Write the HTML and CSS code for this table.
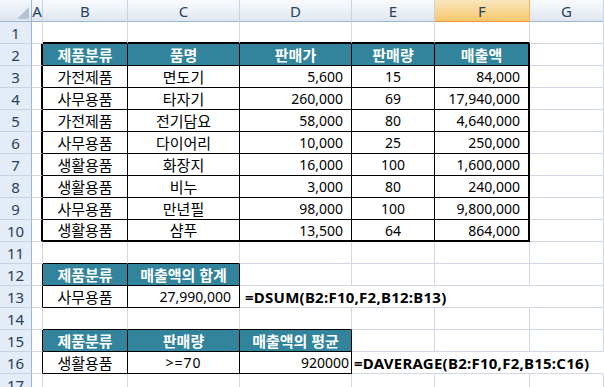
FILE: index.html
```html
<!DOCTYPE html>
<html lang="ko">
<head>
<meta charset="utf-8">
<title>DSUM DAVERAGE</title>
<link rel="stylesheet" href="styles.css">
</head>
<body>
<div class="sheet">
  <!-- header row -->
  <div class="c corner"><svg class="tri" width="12" height="12" viewBox="0 0 12 12"><polygon points="12,0 12,12 0,12" fill="#b5c2d3"/></svg></div>
  <div class="c ch">A</div>
  <div class="c ch">B</div>
  <div class="c ch">C</div>
  <div class="c ch">D</div>
  <div class="c ch">E</div>
  <div class="c ch sel">F</div>
  <div class="c ch">G</div>

  <!-- row 1 -->
  <div class="c rh">1</div>
  <div class="c"></div>
  <div class="c bB"></div><div class="c bB"></div><div class="c bB"></div><div class="c bB"></div><div class="c bB"></div>
  <div class="c"></div>

  <!-- row 2 -->
  <div class="c rh">2</div>
  <div class="c rR"></div>
  <div class="c th r1 b1">제품분류</div>
  <div class="c th r1 b1">품명</div>
  <div class="c th r1 b1">판매가</div>
  <div class="c th r1 b1">판매량</div>
  <div class="c th rR b1">매출액</div>
  <div class="c"></div>

  <!-- row 3 -->
  <div class="c rh">3</div>
  <div class="c rR"></div>
  <div class="c ctr r1 b1">가전제품</div>
  <div class="c ctr r1 b1">면도기</div>
  <div class="c num r1 b1">5,600</div>
  <div class="c ctr n r1 b1">15</div>
  <div class="c num rR b1">84,000</div>
  <div class="c"></div>

  <!-- row 4 -->
  <div class="c rh">4</div>
  <div class="c rR"></div>
  <div class="c ctr r1 b1">사무용품</div>
  <div class="c ctr r1 b1">타자기</div>
  <div class="c num r1 b1">260,000</div>
  <div class="c ctr n r1 b1">69</div>
  <div class="c num rR b1">17,940,000</div>
  <div class="c"></div>

  <!-- row 5 -->
  <div class="c rh">5</div>
  <div class="c rR"></div>
  <div class="c ctr r1 b1">가전제품</div>
  <div class="c ctr r1 b1">전기담요</div>
  <div class="c num r1 b1">58,000</div>
  <div class="c ctr n r1 b1">80</div>
  <div class="c num rR b1">4,640,000</div>
  <div class="c"></div>

  <!-- row 6 -->
  <div class="c rh">6</div>
  <div class="c rR"></div>
  <div class="c ctr r1 b1">사무용품</div>
  <div class="c ctr r1 b1">다이어리</div>
  <div class="c num r1 b1">10,000</div>
  <div class="c ctr n r1 b1">25</div>
  <div class="c num rR b1">250,000</div>
  <div class="c"></div>

  <!-- row 7 -->
  <div class="c rh">7</div>
  <div class="c rR"></div>
  <div class="c ctr r1 b1">생활용품</div>
  <div class="c ctr r1 b1">화장지</div>
  <div class="c num r1 b1">16,000</div>
  <div class="c ctr n r1 b1">100</div>
  <div class="c num rR b1">1,600,000</div>
  <div class="c"></div>

  <!-- row 8 -->
  <div class="c rh">8</div>
  <div class="c rR"></div>
  <div class="c ctr r1 b1">생활용품</div>
  <div class="c ctr r1 b1">비누</div>
  <div class="c num r1 b1">3,000</div>
  <div class="c ctr n r1 b1">80</div>
  <div class="c num rR b1">240,000</div>
  <div class="c"></div>

  <!-- row 9 -->
  <div class="c rh">9</div>
  <div class="c rR"></div>
  <div class="c ctr r1 b1">사무용품</div>
  <div class="c ctr r1 b1">만년필</div>
  <div class="c num r1 b1">98,000</div>
  <div class="c ctr n r1 b1">100</div>
  <div class="c num rR b1">9,800,000</div>
  <div class="c"></div>

  <!-- row 10 -->
  <div class="c rh">10</div>
  <div class="c rR"></div>
  <div class="c ctr r1 bB">생활용품</div>
  <div class="c ctr r1 bB">샴푸</div>
  <div class="c num r1 bB">13,500</div>
  <div class="c ctr n r1 bB">64</div>
  <div class="c num rR bB">864,000</div>
  <div class="c"></div>

  <!-- row 11 -->
  <div class="c rh">11</div>
  <div class="c"></div>
  <div class="c b1"></div>
  <div class="c b1"></div>
  <div class="c"></div>
  <div class="c"></div>
  <div class="c"></div>
  <div class="c"></div>

  <!-- row 12 -->
  <div class="c rh">12</div>
  <div class="c r1"></div>
  <div class="c th r1 b1">제품분류</div>
  <div class="c th r1 b1">매출액의 합계</div>
  <div class="c"></div>
  <div class="c"></div>
  <div class="c"></div>
  <div class="c"></div>

  <!-- row 13 -->
  <div class="c rh">13</div>
  <div class="c r1"></div>
  <div class="c ctr r1 b1">사무용품</div>
  <div class="c num r1 b1">27,990,000</div>
  <div class="c fx fx-sum span3">=DSUM(B2:F10,F2,B12:B13)</div>
  <div class="c"></div>

  <!-- row 14 -->
  <div class="c rh">14</div>
  <div class="c"></div>
  <div class="c b1"></div>
  <div class="c b1"></div>
  <div class="c b1"></div>
  <div class="c"></div>
  <div class="c"></div>
  <div class="c"></div>

  <!-- row 15 -->
  <div class="c rh">15</div>
  <div class="c r1"></div>
  <div class="c th r1 b1">제품분류</div>
  <div class="c th r1 b1">판매량</div>
  <div class="c th r1 b1">매출액의 평균</div>
  <div class="c"></div>
  <div class="c"></div>
  <div class="c"></div>

  <!-- row 16 -->
  <div class="c rh">16</div>
  <div class="c r1"></div>
  <div class="c ctr r1 b1">생활용품</div>
  <div class="c ctr n cond r1 b1">&gt;=70</div>
  <div class="c num gen r1 b1">920000</div>
  <div class="c fx fx-avg span3">=DAVERAGE(B2:F10,F2,B15:C16)</div>

  <!-- row 17 -->
  <div class="c rh">17</div>
  <div class="c"></div>
  <div class="c"></div>
  <div class="c"></div>
  <div class="c"></div>
  <div class="c"></div>
  <div class="c"></div>
  <div class="c"></div>
</div>
</body>
</html>
```

FILE: styles.css
```css
* {
  box-sizing: border-box;
  margin: 0;
  padding: 0;
}

html, body {
  width: 604px;
  height: 387px;
  overflow: hidden;
  background: #ffffff;
}

body {
  font-family: "Noto Sans", "Noto Sans CJK KR", sans-serif;
  font-size: 15px;
  color: #000000;
}

.sheet {
  display: grid;
  grid-template-columns: 32px 11px 85px 112px 112px 83px 95px 74px;
  grid-auto-rows: 22px;
  width: 604px;
}

.c {
  display: flex;
  align-items: center;
  white-space: nowrap;
  overflow: hidden;
  line-height: 1;
  padding: 1px 2px 0 2px;
  border-right: 1px solid #d0d7e5;
  border-bottom: 1px solid #d0d7e5;
}

/* headers */
.corner {
  background: linear-gradient(#f5f8fc, #dde5f0);
  border-right: 1px solid #9eb6ce;
  border-bottom: 1px solid #9eb6ce;
  justify-content: flex-end;
  align-items: flex-end;
  padding: 0 2px 2px 0;
}

.ch {
  justify-content: center;
  background: linear-gradient(#f8fafd 0%, #eef2f8 45%, #dfe6f0 100%);
  border-right: 1px solid #c6d3e3;
  border-bottom: 1px solid #9eb6ce;
  color: #27415f;
  font-size: 15px;
}

.ch.sel {
  background: linear-gradient(#fbe5bd 0%, #f9d99a 45%, #f5c76c 100%);
  border-right: 1px solid #f2b65a;
  border-bottom: 1px solid #f29536;
}

.rh {
  justify-content: center;
  background: #e4ecf7;
  border-right: 1px solid #9eb6ce;
  border-bottom: 1px solid #c5d2e3;
  color: #27415f;
  font-size: 15px;
}

/* cell alignment */
.ctr {
  justify-content: center;
}

.num,
.n {
  font-size: 14px;
}

.num {
  justify-content: flex-end;
  padding-right: 8px;
}

.num.gen {
  padding-right: 2px;
}

.cond {
  letter-spacing: 1px;
}

.th {
  justify-content: center;
  background: #31849b;
  color: #ffffff;
  font-weight: 700;
}

.fx {
  font-weight: 700;
  letter-spacing: 0.25px;
  border-right-color: transparent;
}

.fx-sum {
  padding-left: 5px;
}

.fx-avg {
  padding-left: 2px;
}

.span3 {
  grid-column: span 3;
}

/* borders */
.r1 {
  border-right: 1px solid #000000;
}

.rR {
  border-right: 2px solid #000000;
}

.b1 {
  border-bottom: 1px solid #000000;
}

.bB {
  border-bottom: 2px solid #000000;
}
```
